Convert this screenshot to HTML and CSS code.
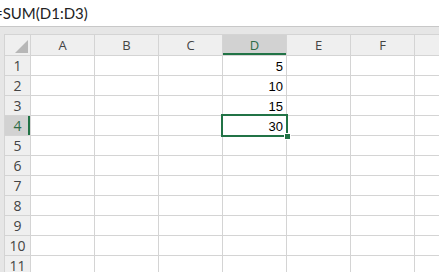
FILE: index.html
```html
<!DOCTYPE html>
<html lang="en">
<head>
    <meta charset="UTF-8">
    <title>Sheet</title>
    <link rel="stylesheet" href="styles.css">
</head>
<body>
    <div class="formula-bar"><span class="formula">=SUM(D1:D3)</span></div>
    <div class="band"></div>
    <div class="sheet">
        <div class="gutter"></div>
        <div class="grid" id="grid"></div>
    </div>

    <script>
        const cols = ["A", "B", "C", "D", "E", "F", ""];
        const values = { 1: "5", 2: "10", 3: "15", 4: "30" };
        const grid = document.getElementById("grid");

        function cell(cls, text) {
            let div = document.createElement("div");
            div.className = cls;
            if (text) div.textContent = text;
            grid.appendChild(div);
            return div;
        }

        let corner = cell("corner");
        corner.innerHTML = '<svg width="13" height="13" viewBox="0 0 13 13"><polygon points="13,0 13,13 0,13" fill="#b7b7b7"/></svg>';
        cols.forEach(c => cell(c === "D" ? "col-head active" : "col-head", c));

        for (let r = 1; r <= 11; r++) {
            cell(r === 4 ? "row-head active" : "row-head", r);
            cols.forEach(c => {
                let cls = "cell";
                if (c === "D" && r === 4) cls += " selected";
                let div = cell(cls, c === "D" ? values[r] : "");
                if (c === "D" && r === 4) {
                    let handle = document.createElement("span");
                    handle.className = "handle";
                    div.appendChild(handle);
                }
            });
        }
    </script>
</body>
</html>
```

FILE: styles.css
```css
body {
    margin: 0;
    width: 439px;
    height: 272px;
    overflow: hidden;
    background: #fff;
    font-family: 'Liberation Sans', Arial, sans-serif;
}
.formula-bar {
    height: 26px;
    border-bottom: 1px solid #c8c8c8;
    background: #fff;
    display: flex;
    align-items: center;
    overflow: hidden;
}
.formula {
    font-family: 'Lato', sans-serif;
    font-size: 15px;
    color: #222;
    margin-left: -6px;
}
.band {
    height: 7px;
    background: #e6e6e6;
}
.sheet {
    display: flex;
    background: #e6e6e6;
}
.gutter {
    width: 4px;
    flex-shrink: 0;
}
.grid {
    display: grid;
    grid-template-columns: 25px repeat(7, 63px);
    grid-template-rows: 20px;
    grid-auto-rows: 19px;
    gap: 1px;
    padding: 1px 0 0 1px;
    background: #d4d4d4;
}
.corner, .col-head, .row-head {
    background: #efefef;
    color: #444;
    font-family: 'Open Sans', sans-serif;
    font-size: 13px;
}
.corner {
    display: flex;
    justify-content: flex-end;
    align-items: flex-end;
    padding: 0 2px 2px 0;
}
.col-head {
    display: flex;
    align-items: center;
    justify-content: center;
}
.row-head {
    display: flex;
    align-items: center;
    justify-content: center;
    font-size: 14px;
}
.col-head.active {
    background: #d2d2d2;
    color: #2e6b47;
    box-shadow: inset 0 -2px 0 #217346;
}
.row-head.active {
    background: #d2d2d2;
    color: #2e6b47;
    box-shadow: inset -2px 0 0 #217346;
}
.cell {
    background: #fff;
    font-size: 13px;
    color: #000;
    text-align: right;
    padding-right: 3px;
    line-height: 21px;
    position: relative;
}
.cell.selected {
    outline: 2px solid #217346;
    z-index: 1;
}
.handle {
    position: absolute;
    right: -5px;
    bottom: -5px;
    width: 5px;
    height: 5px;
    background: #217346;
    border: 1px solid #fff;
}
```
